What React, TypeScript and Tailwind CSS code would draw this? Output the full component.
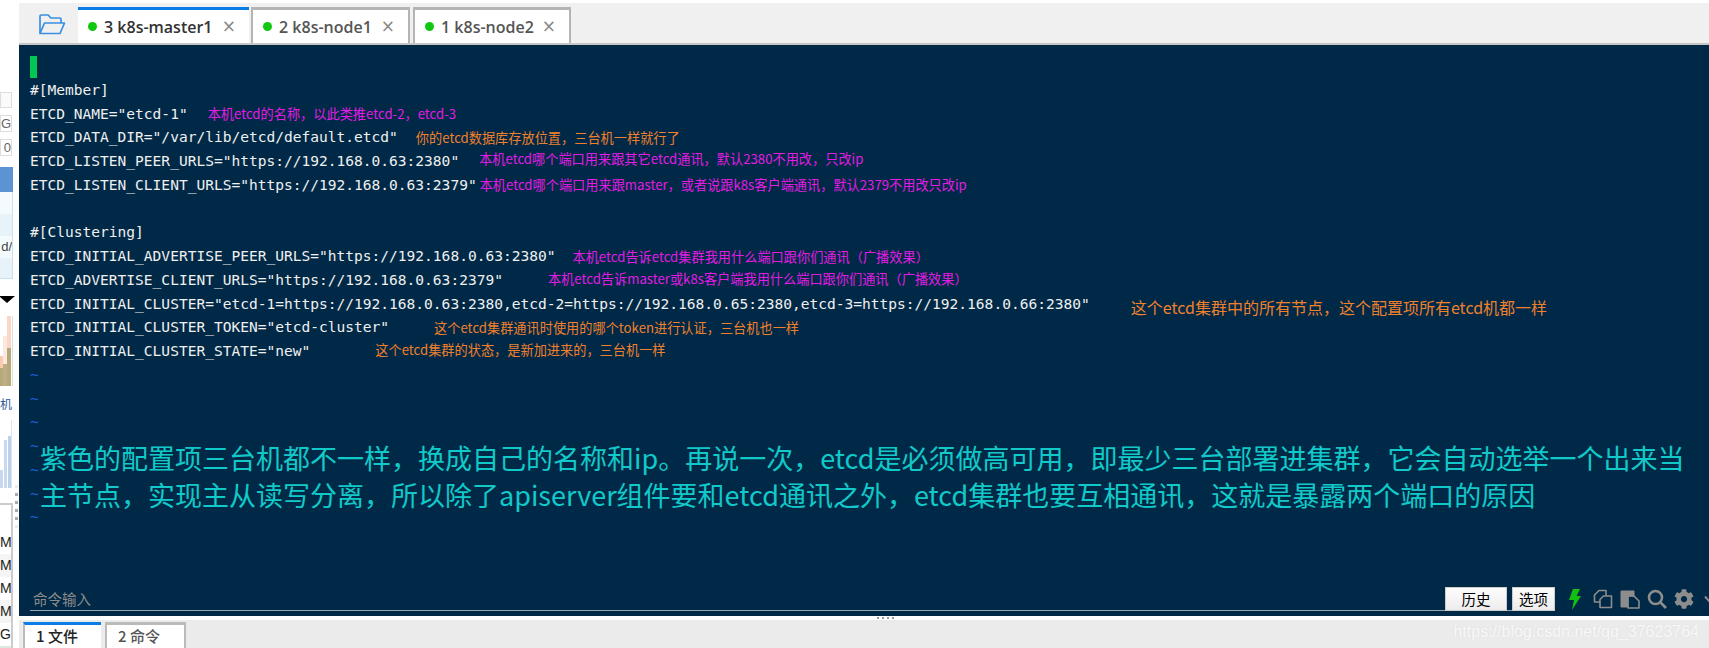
import { FaCog } from "react-icons/fa";

const mono = "font-['DejaVu_Sans_Mono','Liberation_Mono',monospace]";
const cjk = "font-['Noto_Sans_CJK_SC','Noto_Sans',sans-serif]";
const pink = "text-[#e31be3]";
const orange = "text-[#f0802c]";

const configRows = [
  { text: "#[Member]" },
  { text: 'ETCD_NAME="etcd-1"', note: "本机etcd的名称，以此类推etcd-2，etcd-3", cls: `ml-[20px] ${pink}` },
  { text: 'ETCD_DATA_DIR="/var/lib/etcd/default.etcd"', note: "你的etcd数据库存放位置，三台机一样就行了", cls: `ml-[18px] ${orange}` },
  { text: 'ETCD_LISTEN_PEER_URLS="https://192.168.0.63:2380"', note: "本机etcd哪个端口用来跟其它etcd通讯，默认2380不用改，只改ip", cls: `ml-[20px] mb-[6px] ${pink}` },
  { text: 'ETCD_LISTEN_CLIENT_URLS="https://192.168.0.63:2379"', note: "本机etcd哪个端口用来跟master，或者说跟k8s客户端通讯，默认2379不用改只改ip", cls: `ml-[3px] ${pink}` },
  { text: "" },
  { text: "#[Clustering]" },
  { text: 'ETCD_INITIAL_ADVERTISE_PEER_URLS="https://192.168.0.63:2380"', note: "本机etcd告诉etcd集群我用什么端口跟你们通讯（广播效果）", cls: `ml-[17px] ${pink}` },
  { text: 'ETCD_ADVERTISE_CLIENT_URLS="https://192.168.0.63:2379"', note: "本机etcd告诉master或k8s客户端我用什么端口跟你们通讯（广播效果）", cls: `ml-[45px] mb-[2px] ${pink}` },
  { text: 'ETCD_INITIAL_CLUSTER="etcd-1=https://192.168.0.63:2380,etcd-2=https://192.168.0.65:2380,etcd-3=https://192.168.0.66:2380"', note: "这个etcd集群中的所有节点，这个配置项所有etcd机都一样", cls: `ml-[41px] mt-[6px] text-[16px] ${orange}` },
  { text: 'ETCD_INITIAL_CLUSTER_TOKEN="etcd-cluster"', note: "这个etcd集群通讯时使用的哪个token进行认证，三台机也一样", cls: `ml-[45px] ${orange}` },
  { text: 'ETCD_INITIAL_CLUSTER_STATE="new"', note: "这个etcd集群的状态，是新加进来的，三台机一样", cls: `ml-[65px] mb-[4px] ${orange}` },
];

function TopTab({ num, name, active, width }: { num: string; name: string; active?: boolean; width: string }) {
  return (
    <div
      className={`${width} h-full flex items-center pl-[10px] border-t-[3px] bg-white ${
        active ? "border-t-[#0a7de6]" : "border-t-[#b4b4b4] border-x-[2px] border-x-[#b4b4b4]"
      }`}
    >
      <span className="w-[9px] h-[9px] rounded-full bg-[#10c810] shrink-0" />
      <span className={`ml-[7px] text-[16px] font-semibold whitespace-pre ${active ? "text-[#333]" : "text-[#555]"} font-['Open_Sans',sans-serif]`}>
        {num} {name}
      </span>
      <span className="ml-auto mr-[13px] text-[#888] text-[17px] leading-none font-['DejaVu_Sans',sans-serif]">×</span>
    </div>
  );
}

function Sidebar() {
  return (
    <div className="w-[19px] h-full bg-white shrink-0 overflow-hidden relative flex flex-col">
      <div className="pt-[92px] flex flex-col gap-[7px] w-[12px]">
        <div className="h-[16px] border border-[#ddd] bg-[#fafafa]" />
        <div className="h-[17px] border border-[#ddd] bg-white text-[13px] leading-[15px] text-[#666] text-right font-['Liberation_Sans',sans-serif] overflow-hidden">G</div>
        <div className="h-[17px] border border-[#ddd] bg-white text-[13px] leading-[15px] text-[#666] text-right font-['Liberation_Sans',sans-serif] overflow-hidden">0</div>
      </div>
      <div className="mt-[11px] w-[13px] h-[25px] bg-[#5b93d3]" />
      <div className="w-[13px] h-[89px] border-r border-b border-[#c9e0ee] flex flex-col">
        <div className="h-[22px] bg-[#f3fbff]" />
        <div className="h-[22px] bg-[#e7f3f9]" />
        <div className="h-[22px] bg-[#f3fbff] text-[13px] leading-[22px] text-[#444] text-right whitespace-nowrap font-['Liberation_Sans',sans-serif] overflow-hidden">d/</div>
        <div className="flex-1 bg-[#e7f3f9]" />
      </div>
      <div className="mt-[17px] w-0 h-0 border-x-[8px] border-x-transparent border-t-[7px] border-t-black -ml-[1px]" />
      <svg className="mt-[13px] shrink-0" width="13" height="70" viewBox="0 0 13 70">
        <rect x="0" y="40" width="3" height="30" fill="#f9c9b0" />
        <rect x="0" y="52" width="3" height="18" fill="#b7a878" />
        <rect x="7" y="0" width="4" height="70" fill="#fbd7c6" />
        <rect x="7" y="32" width="4" height="38" fill="#b7a878" />
        <rect x="3" y="20" width="4" height="50" fill="#fbe8de" />
        <rect x="3" y="48" width="4" height="22" fill="#bcae85" />
        <rect x="12" y="0" width="1" height="70" fill="#cfe3e0" />
      </svg>
      <div className={`mt-[9px] text-[12px] leading-[18px] text-[#2a5a9e] ${cjk}`}>机</div>
      <svg className="mt-[7px] shrink-0" width="13" height="68" viewBox="0 0 13 68">
        <rect x="0" y="50" width="3" height="18" fill="#c8d9ee" />
        <rect x="4" y="20" width="3" height="48" fill="#c8d9ee" />
        <rect x="8" y="16" width="3" height="52" fill="#bcd1ec" />
        <rect x="11" y="0" width="1" height="68" fill="#dbe6f2" />
      </svg>
      <div className="mt-[15px] w-[11px] h-[145px] border-t-[2px] border-[#ccc] shrink-0 pt-[26px] text-[14px] leading-[23px] text-[#222] text-right font-['Liberation_Sans',sans-serif] overflow-hidden">
        <div>M</div>
        <div className="bg-[#f5f5f5]">M</div>
        <div>M</div>
        <div className="bg-[#f5f5f5]">M</div>
        <div>G</div>
        <div className="bg-[#dbe9df] h-[8px]" />
      </div>
      {/* resize handle dots */}
      <div className="absolute left-[15px] top-[485px] flex flex-col gap-[5px]">
        {["#ececec", "#aaa", "#aaa", "#aaa", "#aaa", "#ececec"].map((c, i) => (
          <span key={i} className="w-[3px] h-[3px]" style={{ backgroundColor: c }} />
        ))}
      </div>
      <div className="absolute left-[11px] top-[503px] w-[2px] h-[145px] bg-[#ccc]" />
    </div>
  );
}

export default function App() {
  return (
    <div className="w-[1709px] h-[648px] flex bg-white overflow-hidden">
      <Sidebar />
      <div className="flex-1 min-w-0 flex flex-col pt-[3px]">
        {/* top tabs */}
        <div className="h-[42px] shrink-0 bg-[#f0f0f0] border-b-[2px] border-[#c6c6c6] flex items-stretch pt-[4px]">
          <div className="w-[59px] flex items-center justify-center pl-[7px] pb-[2px]">
            <svg width="27" height="21" viewBox="0 0 27 21" fill="none" stroke="#3a8fe0" strokeWidth="1.7" strokeLinejoin="round">
              <path d="M1 19V2.2C1 1.5 1.5 1 2.2 1h7l2.6 3h9c.7 0 1.2.5 1.2 1.2V9" />
              <path d="M1 19.5 5.5 9H25.5L21 19.5Z" />
            </svg>
          </div>
          <TopTab num="3" name="k8s-master1" active width="w-[171px]" />
          <div className="w-[2px]" />
          <TopTab num="2" name="k8s-node1" width="w-[159px]" />
          <div className="w-[3px]" />
          <TopTab num="1" name="k8s-node2" width="w-[158px]" />
        </div>

        {/* terminal */}
        <div className="h-[571px] shrink-0 bg-[#002947] relative flex flex-col pl-[11px] pt-[11px] overflow-hidden">
          <div className="w-[7px] h-[22px] bg-[#00c853] shrink-0" />
          <div className={`${mono} text-[14.55px] text-[#f0f0f0]`}>
            {configRows.map((row, i) => (
              <div key={i} className="h-[23.75px] flex items-center whitespace-pre">
                <span>{row.text}</span>
                {row.note && <span className={`${cjk} text-[13.2px] leading-none ${row.cls}`}>{row.note}</span>}
              </div>
            ))}
            {[0, 1, 2, 3, 4, 5, 6].map((i) => (
              <div key={i} className="h-[23.75px] flex items-center text-[#1b5ccc]">~</div>
            ))}
          </div>

          {/* big note over the terminal */}
          <div className={`absolute left-[21px] top-[394px] ${cjk} text-[27px] leading-[37px] text-[#12c9c9] whitespace-pre`}>
            紫色的配置项三台机都不一样，换成自己的名称和ip。再说一次，etcd是必须做高可用，即最少三台部署进集群，它会自动选举一个出来当
            <br />
            主节点，实现主从读写分离，所以除了apiserver组件要和etcd通讯之外，etcd集群也要互相通讯，这就是暴露两个端口的原因
          </div>

          {/* command bar */}
          <div className="mt-auto mb-[5px] h-[24px] flex items-stretch">
            <div className={`w-[1415px] shrink-0 border-b border-[#9aa5ad] flex items-center pl-[3px] text-[14.5px] text-[#8c8c8c] ${cjk}`}>命令输入</div>
            <button className={`w-[62px] shrink-0 bg-gradient-to-b from-[#fdfdfd] to-[#ececec] border border-[#ccc] text-[14.5px] text-black ${cjk}`}>历史</button>
            <div className="w-[5px] shrink-0 border-b border-[#9aa5ad]" />
            <button className={`w-[43px] shrink-0 bg-gradient-to-b from-[#fdfdfd] to-[#ececec] border border-[#ccc] text-[14.5px] text-black ${cjk}`}>选项</button>
            <div className="flex items-center ml-[14px] gap-[7px] shrink-0">
              <svg className="shrink-0" width="12" height="21" viewBox="0 0 12 21">
                <path d="M4 0h7L7.5 7H12L3 21l2-10H0Z" fill="#12c012" />
              </svg>
              <svg className="ml-[5px] shrink-0" width="20" height="20" viewBox="0 0 20 20" fill="none" stroke="#8d8d8d" strokeWidth="1.6" strokeLinejoin="round">
                <path d="M7 13H1.5V6L6 1.5h7V7" />
                <path d="M7 13V10.5L10.5 7H18.5V18.5H7Z" />
              </svg>
              <svg className="shrink-0" width="20" height="20" viewBox="0 0 20 20" stroke="#8d8d8d" strokeLinejoin="round">
                <path d="M1 2h13v5H8v11H1Z" fill="#8d8d8d" />
                <path d="M8 7h6l5 5v7H8Z" fill="none" strokeWidth="1.6" />
              </svg>
              <svg className="shrink-0" width="20" height="20" viewBox="0 0 20 20" fill="none" stroke="#8d8d8d" strokeWidth="2.6">
                <circle cx="8.5" cy="8.5" r="6.5" />
                <path d="M13.5 13.5 19 19" />
              </svg>
              <FaCog className="text-[#8d8d8d] text-[20px] shrink-0" />
              <svg className="ml-[3px] shrink-0" width="10" height="8" viewBox="0 0 10 8" fill="none" stroke="#8d8d8d" strokeWidth="2">
                <path d="M1 1.5 5 6l4-4.5" />
              </svg>
            </div>
          </div>
        </div>

        {/* bottom tabs */}
        <div className="h-[4px] shrink-0 bg-white relative">
          <div className="absolute left-[858px] top-[1px] flex gap-[3px]">
            {[0, 1, 2, 3].map((i) => (
              <span key={i} className="w-[2px] h-[2px] bg-[#999]" />
            ))}
          </div>
        </div>
        <div className="flex-1 bg-[#ebebeb] flex items-stretch pl-[4px] pt-[2px] relative">
          <div className={`w-[78px] border-t-[3px] border-t-[#0a7de6] border-l-[2px] border-l-[#bbb] bg-white pl-[11px] text-[15px] font-medium leading-[22px] text-[#222] whitespace-pre ${cjk}`}>1 文件</div>
          <div className={`ml-[4px] w-[81px] border-t-[3px] border-x-[2px] border-[#bbb] bg-white pl-[11px] text-[15px] font-medium leading-[22px] text-[#555] whitespace-pre ${cjk}`}>2 命令</div>
          <div className="absolute right-[10px] top-[0px] text-[16px] leading-[24px] text-[#f8f8f8] [text-shadow:0_0_2px_#dcdcdc] font-['Liberation_Sans',sans-serif]">
            https://blog.csdn.net/qq_37623764
          </div>
        </div>
      </div>
    </div>
  );
}
